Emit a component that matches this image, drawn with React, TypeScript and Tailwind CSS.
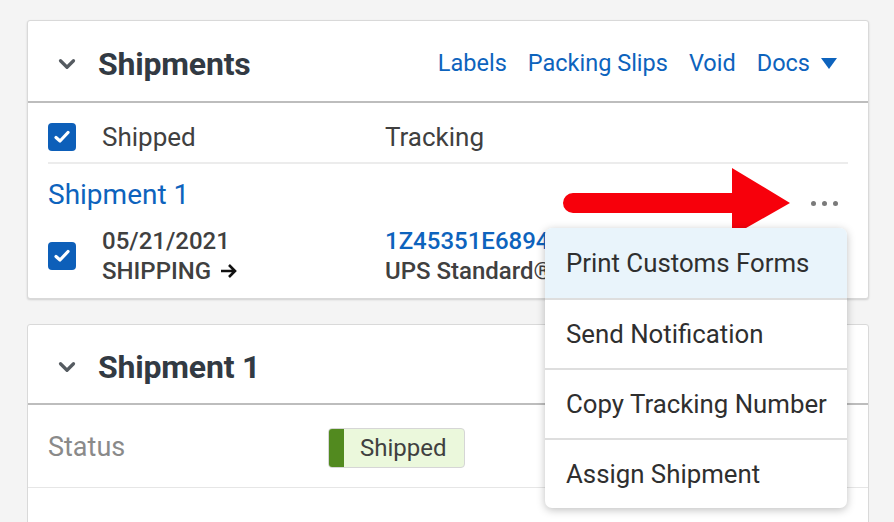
import { ChevronDown } from "lucide-react";

const blue = "text-[#0d63bd]";

function Checkbox() {
    return (
        <div className="w-[28px] h-[28px] rounded-[4px] bg-[#0d5fb9] flex items-center justify-center shrink-0">
            <svg width="16" height="14" viewBox="0 0 16 14">
                <path d="M2 7.5 L6 11 L14 2.5" fill="none" stroke="white" strokeWidth="3.2" strokeLinecap="round" strokeLinejoin="round" />
            </svg>
        </div>
    );
}

function RedArrow() {
    return (
        <svg className="absolute left-[560px] top-[166px]" width="234" height="72" viewBox="0 0 234 72">
            <path d="M13 27 L172 27 L172 2 L230 37 L172 70 L172 47 L13 47 A10 10 0 0 1 13 27 Z" fill="#f7000b" />
        </svg>
    );
}

function ActionMenu() {
    const items = ["Print Customs Forms", "Send Notification", "Copy Tracking Number", "Assign Shipment"];
    return (
        <div className="absolute left-[545px] top-[228px] w-[302px] bg-white rounded-[7px] shadow-[0_2px_8px_rgba(0,0,0,0.25)] overflow-hidden">
            {items.map((item, i) => (
                <div
                    key={item}
                    className={`h-[70px] flex items-center px-[21px] text-[25.8px] whitespace-nowrap text-[#2f2f2f] ${i === 0 ? "bg-[#e9f4fb]" : ""} ${i > 0 ? "border-t-2 border-[#dedede]" : ""}`}
                >
                    {item}
                </div>
            ))}
        </div>
    );
}

function CardHeader({ title, height, children }: { title: string; height: string; children?: React.ReactNode }) {
    return (
        <div className={`${height} flex items-center pt-[5px] pl-[26px] pr-[31px] border-b-2 border-[#bdbdbd]`}>
            <ChevronDown size={26} strokeWidth={3} className="text-[#555b61] mr-[18px]" />
            <h2 className="text-[32px] font-bold text-[#323a43] tracking-[-0.2px]">{title}</h2>
            <div className="ml-auto flex items-center gap-[21px]">{children}</div>
        </div>
    );
}

export default function App() {
    return (
        <div
            className="relative w-[894px] h-[522px] overflow-hidden bg-[#f4f4f4] pl-[27px] pr-[25px] pt-[20px]"
            style={{ fontFamily: "Roboto, 'Liberation Sans', sans-serif" }}
        >
            {/* shipments card */}
            <div className="bg-white border border-[#d9d9d9] rounded-[3px] shadow-[0_1px_2px_rgba(0,0,0,0.15)]">
                <CardHeader title="Shipments" height="h-[82px]">
                    <span className={`${blue} text-[23.5px]`}>Labels</span>
                    <span className={`${blue} text-[23.5px]`}>Packing Slips</span>
                    <span className={`${blue} text-[23.5px]`}>Void</span>
                    <span className={`${blue} text-[23.5px] flex items-center gap-[11px]`}>
                        Docs
                        <svg width="16" height="12" viewBox="0 0 16 12">
                            <path d="M0 0 L16 0 L8 11 Z" fill="#0d63bd" />
                        </svg>
                    </span>
                </CardHeader>

                <div className="px-[20px]">
                    <div className="flex items-center pt-[20px] pb-[11px] border-b-2 border-[#ececec] text-[26px] leading-[28px] text-[#404040]">
                        <Checkbox />
                        <span className="w-[309px] pl-[26px]">Shipped</span>
                        <span>Tracking</span>
                    </div>

                    <div className="flex justify-between pt-[16px] pr-[10px] h-[46px]">
                        <span className={`${blue} text-[28px] leading-[30px]`}>Shipment 1</span>
                        <div className="flex gap-[6px] self-end mb-[4px]">
                            <span className="w-[5px] h-[5px] rounded-full bg-[#7a7a7a]" />
                            <span className="w-[5px] h-[5px] rounded-full bg-[#7a7a7a]" />
                            <span className="w-[5px] h-[5px] rounded-full bg-[#7a7a7a]" />
                        </div>
                    </div>

                    <div className="flex items-center pt-[16px] pb-[12px]">
                        <Checkbox />
                        <div className="w-[309px] pl-[26px] text-[24px] font-medium text-[#404040] leading-[30px]">
                            <div>05/21/2021</div>
                            <div className="flex items-center gap-[9px]">
                                SHIPPING
                                <svg width="18" height="16" viewBox="0 0 18 16">
                                    <path d="M1 8 H15 M9 2 L15 8 L9 14" fill="none" stroke="#111" strokeWidth="2.6" />
                                </svg>
                            </div>
                        </div>
                        <div className="text-[24px] font-medium leading-[30px] whitespace-nowrap">
                            <div className={blue}>1Z45351E6894325961</div>
                            <div className="text-[#404040]">UPS Standard®</div>
                        </div>
                    </div>
                </div>
            </div>

            {/* shipment detail card */}
            <div className="mt-[25px] h-[300px] bg-white border border-[#d9d9d9] rounded-[3px]">
                <CardHeader title="Shipment 1" height="h-[80px]" />
                <div className="h-[83px] flex items-center pt-[3px] pl-[20px] border-b border-[#e6e6e6]">
                    <span className="w-[280px] text-[27px] text-[#8a8a8a]">Status</span>
                    <div className="h-[40px] flex items-stretch rounded-[4px] border border-[#d6d6d6] bg-[#ebf8dc] overflow-hidden">
                        <span className="w-[15px] bg-[#528a1f]" />
                        <span className="flex items-center pl-[16px] pr-[17px] text-[24px] text-[#404040]">Shipped</span>
                    </div>
                </div>
            </div>

            <RedArrow />
            <ActionMenu />
        </div>
    );
}
